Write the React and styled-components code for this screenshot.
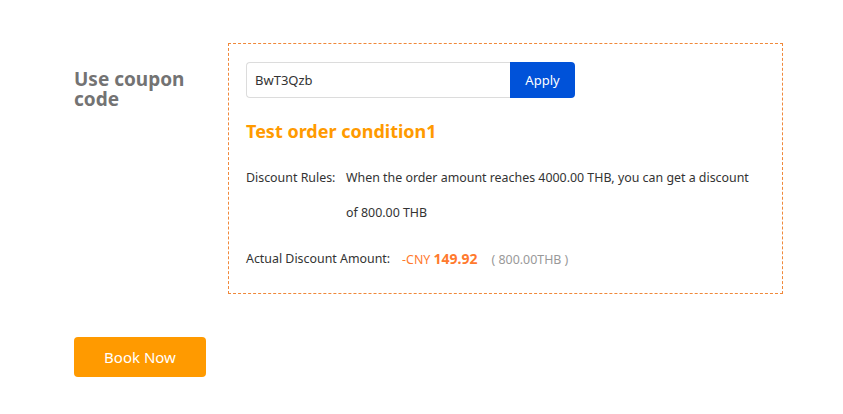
import React, { useState } from "react";
import styled, { createGlobalStyle } from "styled-components";

const GlobalStyle = createGlobalStyle`
  body {
    margin: 0;
    background: #fff;
    font-family: "Noto Sans", "Open Sans", sans-serif;
  }
`;

const Page = styled.div`
  padding: 43px 0 0 74px;
`;

const CouponRow = styled.div`
  display: flex;
  align-items: flex-start;
`;

const Label = styled.div`
  width: 120px;
  margin-right: 34px;
  padding-top: 26px;
  font-size: 19px;
  font-weight: 700;
  line-height: 20px;
  color: #737373;
`;

const CouponBox = styled.div`
  box-sizing: border-box;
  width: 555px;
  height: 251px;
  border: 1px dashed #f0883a;
  padding: 18px 28px 18px 17px;
`;

const InputGroup = styled.div`
  display: flex;
  width: 329px;
  height: 36px;
`;

const CodeInput = styled.input`
  flex: 1;
  min-width: 0;
  box-sizing: border-box;
  border: 1px solid #dcdcdc;
  border-right: none;
  border-radius: 4px 0 0 4px;
  padding: 0 8px;
  font-family: inherit;
  font-size: 13px;
  color: #333;
  outline: none;
`;

const ApplyButton = styled.button`
  width: 65px;
  border: none;
  border-radius: 0 4px 4px 0;
  background: #0052d9;
  color: #fff;
  font-family: inherit;
  font-size: 13px;
  cursor: pointer;
`;

const Title = styled.h3`
  margin: 20px 0 0;
  font-size: 18px;
  font-weight: 700;
  line-height: 26px;
  color: #ff9a00;
`;

const InfoRow = styled.div`
  display: flex;
  margin-top: ${(p) => p.gap || 0}px;
  font-size: 12.4px;
  line-height: 35px;
  color: #333;
`;

const InfoLabel = styled.div`
  flex: ${(p) => (p.fixed ? "0 0 100px" : "none")};
  margin-right: ${(p) => (p.fixed ? 0 : 12)}px;
`;

const InfoValue = styled.div`
  flex: 1;
`;

const Amount = styled.span`
  color: #ff7a2e;
  b {
    font-size: 14px;
  }
`;

const Origin = styled.span`
  margin-left: 14px;
  color: #999;
`;

const BookButton = styled.button`
  margin-top: 43px;
  width: 132px;
  height: 40px;
  border: none;
  border-radius: 4px;
  background: #ff9a00;
  color: #fff;
  font-family: inherit;
  font-size: 15px;
  cursor: pointer;
`;

export default function App() {
  const [code, setCode] = useState("BwT3Qzb");

  return (
    <>
      <GlobalStyle />
      <Page>
        <CouponRow>
          <Label>Use coupon code</Label>
          <CouponBox>
            <InputGroup>
              <CodeInput value={code} onChange={(e) => setCode(e.target.value)} />
              <ApplyButton>Apply</ApplyButton>
            </InputGroup>
            <Title>Test order condition1</Title>
            <InfoRow gap={16}>
              <InfoLabel fixed>Discount Rules:</InfoLabel>
              <InfoValue>
                When the order amount reaches 4000.00 THB, you can get a discount of 800.00 THB
              </InfoValue>
            </InfoRow>
            <InfoRow gap={11}>
              <InfoLabel>Actual Discount Amount:</InfoLabel>
              <InfoValue>
                <Amount>
                  -CNY <b>149.92</b>
                </Amount>
                <Origin>( 800.00THB )</Origin>
              </InfoValue>
            </InfoRow>
          </CouponBox>
        </CouponRow>
        <BookButton>Book Now</BookButton>
      </Page>
    </>
  );
}
